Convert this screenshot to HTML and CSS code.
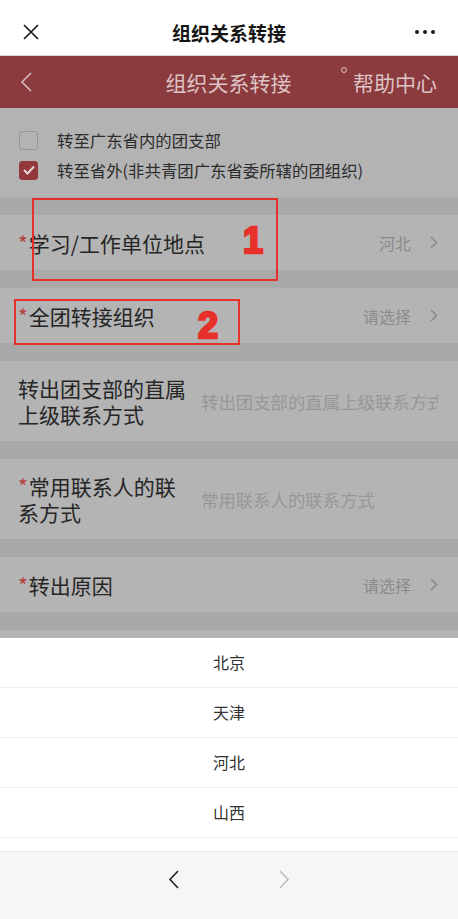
FILE: index.html
```html
<!DOCTYPE html>
<html lang="zh-CN">
<head>
<meta charset="UTF-8">
<meta name="viewport" content="width=device-width, initial-scale=1.0">
<title>组织关系转接</title>
<link rel="stylesheet" href="styles.css">
</head>
<body>
<div class="app">
  <div class="wx-bar">
    <span class="wx-close">
      <svg width="16" height="16" viewBox="0 0 16 16"><path d="M1 1L15 15M15 1L1 15" stroke="#1b1b1b" stroke-width="1.7"/></svg>
    </span>
    <div class="wx-title">组织关系转接</div>
    <span class="wx-more"><i></i><i></i><i></i></span>
  </div>

  <div class="header">
    <span class="back">
      <svg width="12" height="20" viewBox="0 0 12 20"><path d="M11 1L2 10l9 9" fill="none" stroke="#d6bec0" stroke-width="1.5"/></svg>
    </span>
    <h1>组织关系转接</h1>
    <a class="help"><span class="deg"></span>帮助中心</a>
  </div>

  <div class="content">
    <div class="options">
      <label class="opt"><span class="box"></span>转至广东省内的团支部</label>
      <label class="opt"><span class="box on">
        <svg width="12" height="10" viewBox="0 0 12 10"><path d="M1 5l3.5 3.5L11 1.5" fill="none" stroke="#e6d6d7" stroke-width="2"/></svg>
      </span>转至省外(非共青团广东省委所辖的团组织)</label>
    </div>

    <div class="row row-select">
      <div class="label"><span class="star">*</span>学习/工作单位地点</div>
      <span class="value">河北</span>
      <svg class="chev" width="8" height="13" viewBox="0 0 8 13"><path d="M1 1l5.5 5.5L1 12" fill="none" stroke="#8a8a8a" stroke-width="1.6"/></svg>
    </div>

    <div class="row row-select">
      <div class="label"><span class="star">*</span>全团转接组织</div>
      <span class="value">请选择</span>
      <svg class="chev" width="8" height="13" viewBox="0 0 8 13"><path d="M1 1l5.5 5.5L1 12" fill="none" stroke="#8a8a8a" stroke-width="1.6"/></svg>
    </div>

    <div class="row row-input tall">
      <div class="label">转出团支部的直属上级联系方式</div>
      <input type="text" placeholder="转出团支部的直属上级联系方式">
    </div>

    <div class="row row-input tall">
      <div class="label"><span class="star">*</span>常用联系人的联系方式</div>
      <input type="text" placeholder="常用联系人的联系方式">
    </div>

    <div class="row row-select">
      <div class="label"><span class="star">*</span>转出原因</div>
      <span class="value">请选择</span>
      <svg class="chev" width="8" height="13" viewBox="0 0 8 13"><path d="M1 1l5.5 5.5L1 12" fill="none" stroke="#8a8a8a" stroke-width="1.6"/></svg>
    </div>

    <div class="row"></div>

    <!-- annotations drawn over the form -->
    <div class="mark mark-1"></div>
    <div class="mark mark-2"></div>
    <span class="num num-1">1</span>
    <span class="num num-2">2</span>
  </div>

  <div class="picker">
    <ul class="picker-list">
      <li>北京</li>
      <li>天津</li>
      <li>河北</li>
      <li>山西</li>
      <li></li>
    </ul>
    <div class="picker-nav">
      <svg width="16" height="19" viewBox="0 0 16 19"><path d="M12 1L4 9.5l8 8.5" fill="none" stroke="#222" stroke-width="1.6"/></svg>
      <svg width="16" height="19" viewBox="0 0 16 19"><path d="M4 1l8 8.5L4 18" fill="none" stroke="#bdbdbd" stroke-width="1.6"/></svg>
    </div>
  </div>
</div>
</body>
</html>
```

FILE: styles.css
```css
body {
  margin: 0;
  font-family: "Noto Sans CJK SC", "Noto Sans", sans-serif;
  color: #262626;
}
.app {
  height: 919px;
  display: flex;
  flex-direction: column;
  overflow: hidden;
}

/* wechat top bar */
.wx-bar {
  height: 46px;
  padding: 9px 23px 0 23px;
  display: grid;
  grid-template-columns: 1fr auto 1fr;
  align-items: center;
  background: #fff;
  border-bottom: 1px solid #d6d6d6;
}
.wx-close {
  display: flex;
}
.wx-title {
  font-size: 19px;
  font-weight: 600;
  color: #151515;
}
.wx-more {
  justify-self: end;
  display: flex;
  gap: 4px;
}
.wx-more i {
  width: 4px;
  height: 4px;
  border-radius: 50%;
  background: #1b1b1b;
}

/* red page header */
.header {
  height: 52px;
  padding: 0 21px 0 20px;
  display: grid;
  grid-template-columns: 1fr auto 1fr;
  align-items: center;
  background: #8b3a3d;
}
.back {
  display: flex;
}
.header h1 {
  margin: 0;
  font-size: 21px;
  font-weight: normal;
  color: #dcc3c5;
}
.help {
  justify-self: end;
  display: flex;
  align-items: flex-start;
  font-size: 21px;
  line-height: 30px;
  color: #dcc3c5;
}
.help .deg {
  width: 6px;
  height: 6px;
  border: 1.2px solid #dcc3c5;
  border-radius: 50%;
  margin: 0 6px 0 0;
  box-sizing: border-box;
}

/* content */
.content {
  flex: 1;
  position: relative;
  overflow: hidden;
  background: #a9a9a9;
}
.options {
  background: #b3b3b3;
  padding: 22px 19px 17px;
}
.opt {
  display: flex;
  align-items: center;
  gap: 19px;
  height: 20px;
  font-size: 16.4px;
  color: #2c2c2c;
}
.opt + .opt {
  margin-top: 10px;
}
.box {
  width: 19px;
  height: 19px;
  box-sizing: border-box;
  border: 1px solid #959595;
  border-radius: 3px;
  flex: none;
}
.box.on {
  background: #94383d;
  border-color: #94383d;
  display: grid;
  place-items: center;
}

.row {
  margin-top: 18px;
  min-height: 55px;
  padding: 0 20px 0 18px;
  display: flex;
  align-items: center;
  background: #b4b4b4;
}
.row.tall {
  min-height: 80px;
}
.label {
  font-size: 21px;
  line-height: 26px;
  color: #262626;
}
.star {
  color: #b43c3c;
  margin-right: 1px;
}
.row-select .label {
  flex: 1;
}
.value {
  font-size: 16px;
  color: #8a8a8a;
}
.chev {
  margin-left: 19px;
  flex: none;
}
.row-input .label {
  width: 172px;
  flex: none;
  margin-right: 11px;
}
.row-input input {
  flex: 1;
  min-width: 0;
  border: 0;
  padding: 0;
  background: transparent;
  font-family: inherit;
  font-size: 17.4px;
  outline: none;
}
.row-input input::placeholder {
  color: #979797;
}

/* red annotations */
.mark {
  position: absolute;
  box-sizing: border-box;
  border: 2.5px solid #e8302a;
}
.mark-1 {
  left: 32px;
  top: 90px;
  width: 246px;
  height: 83px;
}
.mark-2 {
  left: 14px;
  top: 191px;
  width: 226px;
  height: 46px;
}
.num {
  position: absolute;
  font-family: "Liberation Sans", Arial, sans-serif;
  font-weight: bold;
  font-size: 36px;
  line-height: 1;
  color: #e8302a;
  -webkit-text-stroke: 2.5px #e8302a;
}
.num-1 {
  left: 243px;
  top: 115px;
}
.num-2 {
  left: 198px;
  top: 200px;
}

/* bottom picker */
.picker {
  background: #fff;
}
.picker-list {
  height: 213px;
  margin: 0;
  padding: 0;
  list-style: none;
  overflow: hidden;
}
.picker-list li {
  height: 49px;
  line-height: 49px;
  text-align: center;
  font-size: 16px;
  color: #333;
  border-bottom: 1px solid #efefef;
}
.picker-nav {
  height: 68px;
  box-sizing: border-box;
  padding-top: 18px;
  display: flex;
  justify-content: center;
  align-items: flex-start;
  gap: 94px;
  background: #f6f6f6;
  border-top: 1px solid #ececec;
}
```
